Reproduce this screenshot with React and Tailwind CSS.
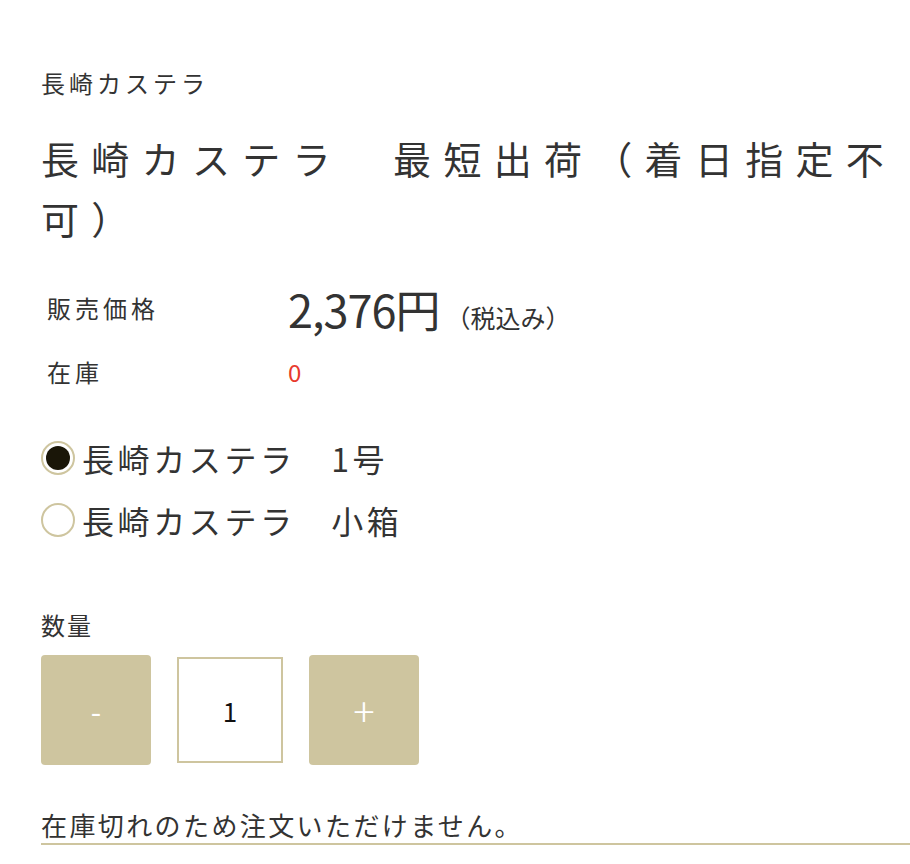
import { useState } from 'react';

const font = { fontFamily: '"Noto Sans CJK JP", "Noto Sans", sans-serif' };

const options = ['長崎カステラ　1号', '長崎カステラ　小箱'];

export default function App() {
    const [selected, setSelected] = useState(0);
    const [qty, setQty] = useState(1);

    return (
        <div className="min-h-screen bg-white pl-[41px] pt-[65px] text-[#333]" style={font}>
            <p className="text-[24px] leading-[36px] tracking-[4px]">長崎カステラ</p>

            <h1 className="mt-[27px] text-[38px] leading-[60px] tracking-[12.3px]">
                長崎カステラ　最短出荷（着日指定不可）
            </h1>

            <div className="mt-[28px]">
                <div className="flex h-[64px] items-center">
                    <div className="w-[247px] pl-[6px] text-[24px] tracking-[4px]">販売価格</div>
                    <div className="flex items-baseline">
                        <span className="text-[45px] leading-none tracking-[-1px]">2,376円</span>
                        <span className="ml-[6px] text-[25px] leading-none">（税込み）</span>
                    </div>
                </div>
                <div className="flex h-[64px] items-center">
                    <div className="w-[247px] pl-[6px] text-[24px] tracking-[4px]">在庫</div>
                    <div className="text-[24px] text-[#e8392c]">0</div>
                </div>
            </div>

            <div className="mt-[23px]">
                {options.map((label, i) => (
                    <label key={label} className="flex h-[62px] cursor-pointer items-center" onClick={() => setSelected(i)}>
                        <span className="flex h-[34px] w-[34px] shrink-0 items-center justify-center rounded-full border-2 border-[#cec59f] bg-white">
                            {selected === i && <span className="h-[24px] w-[24px] rounded-full bg-[#1a1608]"></span>}
                        </span>
                        <span className="ml-[7px] text-[32px] leading-none tracking-[3.6px]">{label}</span>
                    </label>
                ))}
            </div>

            <p className="mt-[56px] text-[24px] leading-[36px] tracking-[2px]">数量</p>

            <div className="mt-[12px] flex items-center gap-[26px]">
                <button
                    className="flex h-[110px] w-[110px] items-center justify-center rounded-[4px] bg-[#cec59f] text-[30px] text-white"
                    onClick={() => setQty(Math.max(1, qty - 1))}
                >
                    -
                </button>
                <div className="flex h-[106px] w-[106px] items-center justify-center border-2 border-[#cec59f] bg-white text-[26px] text-[#111]">
                    {qty}
                </div>
                <button
                    className="flex h-[110px] w-[110px] items-center justify-center rounded-[4px] bg-[#cec59f] text-[40px] font-light text-white"
                    onClick={() => setQty(qty + 1)}
                >
                    +
                </button>
            </div>

            <p className="mt-[42px] border-b-2 border-[#cec59f] text-[26px] leading-[36px] tracking-[2.4px]">
                在庫切れのため注文いただけません。
            </p>
        </div>
    );
}
